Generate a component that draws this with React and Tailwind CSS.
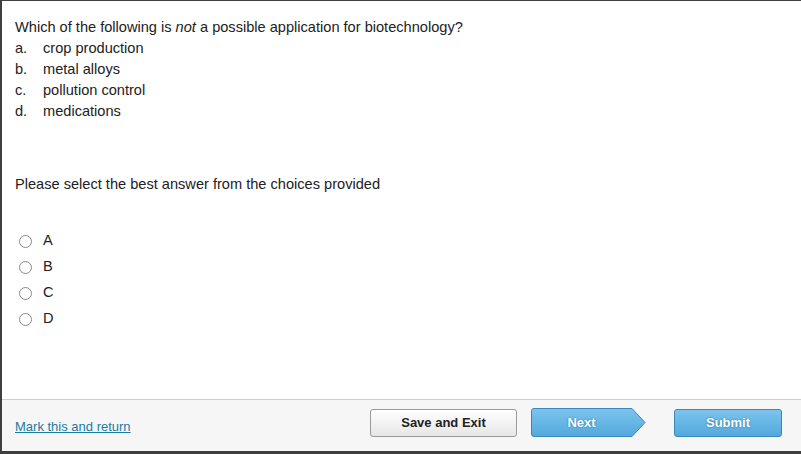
import React from "react";

const font = { fontFamily: '"Liberation Sans", Arial, sans-serif' };

function Radio({ label }) {
  return (
    <label className="flex items-center h-[26px]">
      <span className="ml-[4px] w-[13px] h-[13px] rounded-full border border-[#8a8a8a] bg-white"></span>
      <span className="ml-[11px] text-[14.6px] text-[#222]">{label}</span>
    </label>
  );
}

export default function App() {
  return (
    <div
      className="w-[801px] h-[454px] flex flex-col bg-white border-t border-l-2 border-b-[3px] border-[#3f3f3f] text-[#222]"
      style={font}
    >
      <div className="flex-1 pt-[16px] pl-[13px]">
        <div className="text-[14.6px] leading-[21px]">
          <div>
            Which of the following is <i>not</i> a possible application for biotechnology?
          </div>
          {[
            ["a.", "crop production"],
            ["b.", "metal alloys"],
            ["c.", "pollution control"],
            ["d.", "medications"],
          ].map(([l, t]) => (
            <div key={l} className="flex">
              <span className="w-[28px]">{l}</span>
              <span>{t}</span>
            </div>
          ))}
        </div>
        <div className="mt-[52px] text-[14.6px] leading-[21px]">
          Please select the best answer from the choices provided
        </div>
        <div className="mt-[33px] flex flex-col">
          {["A", "B", "C", "D"].map((l) => (
            <Radio key={l} label={l} />
          ))}
        </div>
      </div>
      <div className="h-[52px] border-t border-[#cfcfcf] bg-[#f6f6f6] flex items-start pl-[13px] pr-[19px]">
        <a className="text-[13px] text-[#1a7ca3] underline mt-[17px]" href="#">
          Mark this and return
        </a>
        <div className="ml-auto flex items-center mt-[8px]">
          <button className="w-[147px] h-[28px] rounded-[3px] border border-[#9a9a9a] bg-gradient-to-b from-[#ffffff] to-[#e6e6e6] text-[13px] font-bold text-[#222]">
            Save and Exit
          </button>
          <div className="relative ml-[14px] w-[115px] h-[29px]">
            <svg className="absolute inset-0" width="115" height="29" viewBox="0 0 115 29">
              <defs>
                <linearGradient id="nb" x1="0" y1="0" x2="0" y2="1">
                  <stop offset="0" stopColor="#7cc4ee" />
                  <stop offset="1" stopColor="#52a9dc" />
                </linearGradient>
              </defs>
              <path
                d="M3 0.5 H101 L114 14.5 L101 28.5 H3 Q0.5 28.5 0.5 26 V3 Q0.5 0.5 3 0.5 Z"
                fill="url(#nb)"
                stroke="#3a88bb"
                strokeWidth="1"
              />
            </svg>
            <span
              className="absolute left-0 top-0 w-[101px] h-[29px] flex items-center justify-center text-[13px] font-bold text-white"
              style={{ textShadow: "0 0 2px #2d6f99" }}
            >
              Next
            </span>
          </div>
          <button
            className="ml-[28px] w-[108px] h-[28px] rounded-[3px] border border-[#3a88bb] bg-gradient-to-b from-[#7cc4ee] to-[#52a9dc] text-[13px] font-bold text-white"
            style={{ textShadow: "0 0 2px #2d6f99" }}
          >
            Submit
          </button>
        </div>
      </div>
    </div>
  );
}
